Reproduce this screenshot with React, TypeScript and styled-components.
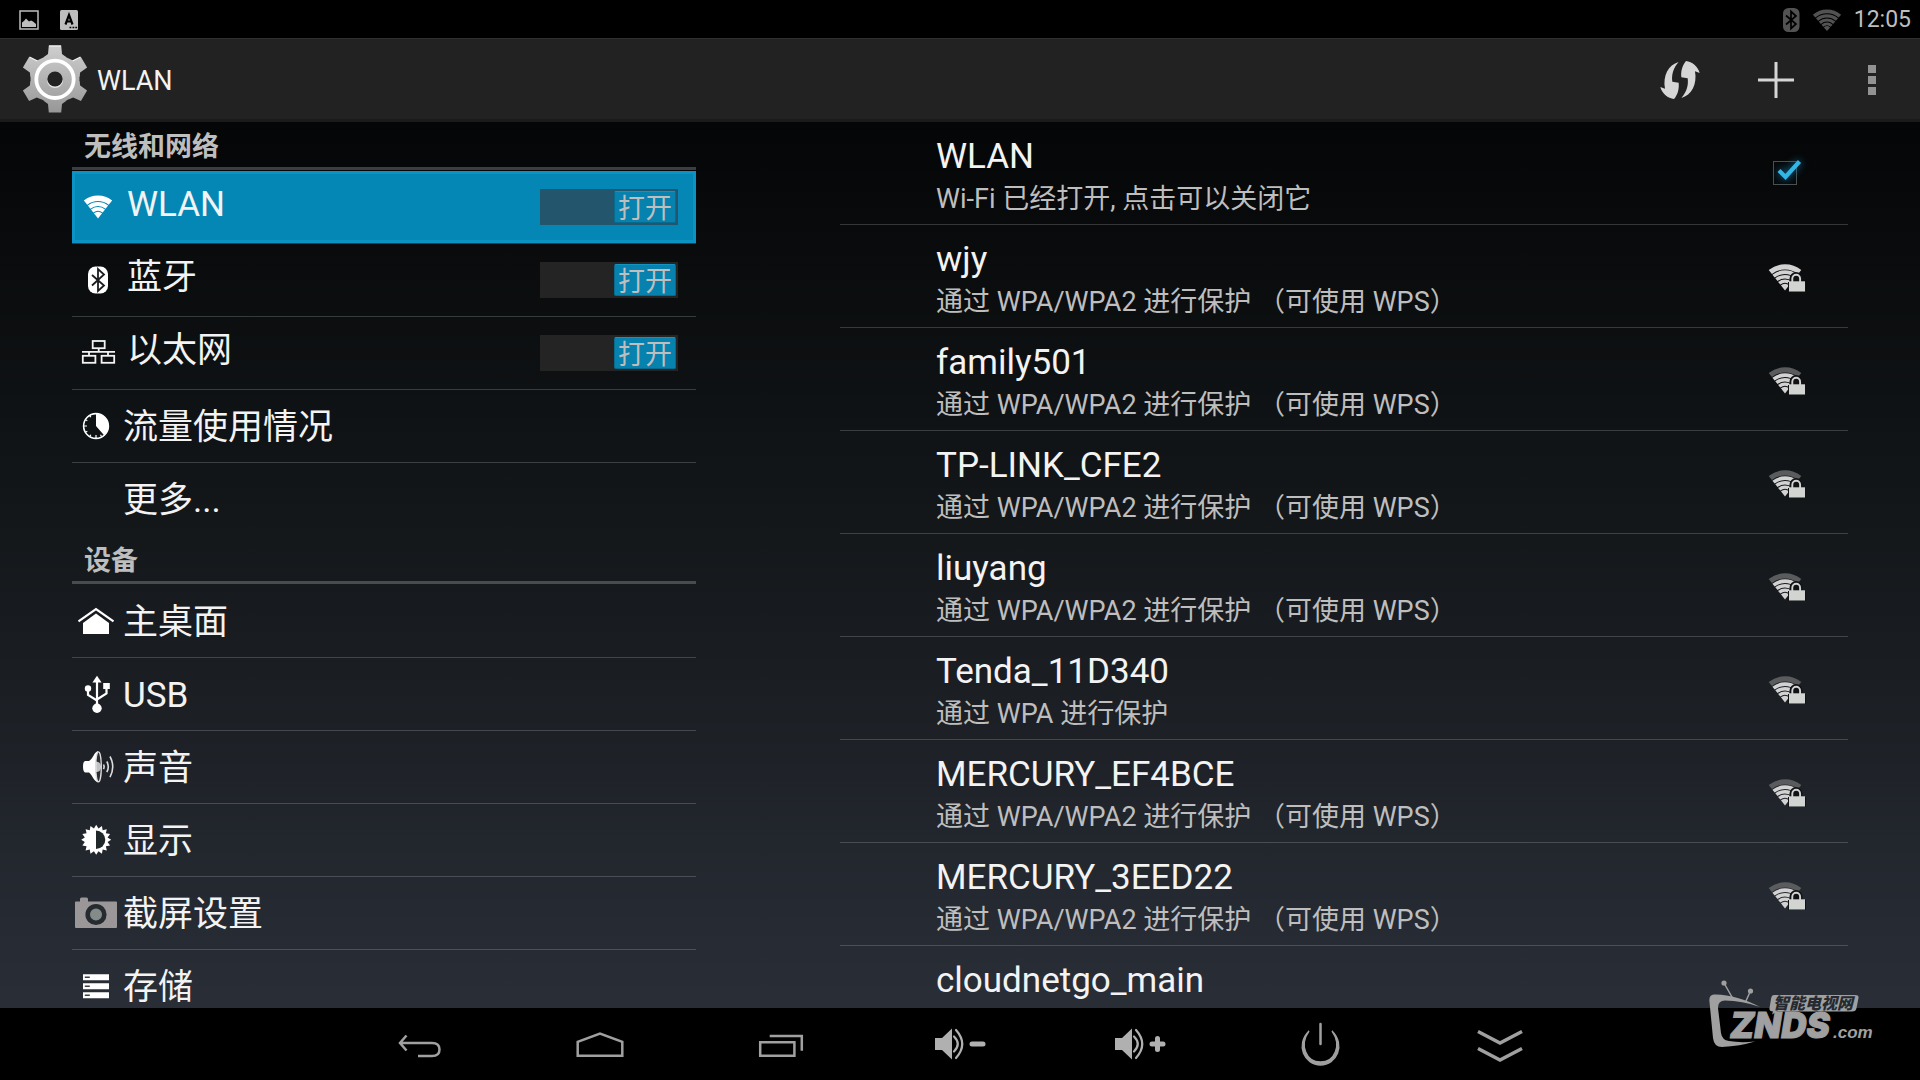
import React from 'react';
import styled, { createGlobalStyle } from 'styled-components';

const GlobalStyle = createGlobalStyle`
  *, *::before, *::after { box-sizing: border-box; }
  html, body { margin: 0; padding: 0; background: #000; overflow: hidden; }
  body { font-family: Roboto, "Noto Sans CJK SC", sans-serif; color: #f3f3f3; }
  button { font: inherit; color: inherit; background: none; border: 0; padding: 0; margin: 0; }
  h1, h2, ul, p { margin: 0; padding: 0; font-weight: 400; }
  ul { list-style: none; }
  svg { display: block; flex: none; }
`;

const Screen = styled.div`
  position: relative;
  height: 100vh;
  display: flex;
  flex-direction: column;
  overflow: hidden;
  background: linear-gradient(#000 0%, #14181b 50%, #292d36 92%, #2a2e38 100%);
`;

const StatusBar = styled.header`
  flex: none;
  height: 38px;
  padding: 2px 9px 0 19px;
  display: flex;
  align-items: center;
  justify-content: space-between;
  background: #000;
`;

const StatusGroup = styled.div<{ $gap: number }>`
  display: flex;
  align-items: center;
  gap: ${(p) => p.$gap}px;
`;

const Clock = styled.time`
  font-size: 23px;
  line-height: 36px;
  color: #bebebe;
`;

const ActionBar = styled.div`
  flex: none;
  height: 84px;
  padding-top: 2px;
  display: flex;
  align-items: center;
  background: #222;
  border-top: 1px solid #303030;
  border-bottom: 3px solid #1b1b1b;
`;

const AppTitle = styled.div`
  flex: 1;
  display: flex;
  align-items: center;
  gap: 8px;
  padding-left: 21px;
  h1 { padding-top: 2px; font-size: 27px; line-height: 36px; }
`;

const ActionButton = styled.button`
  width: 96px;
  height: 78px;
  display: grid;
  place-items: center;
`;

const Panes = styled.main`
  flex: 1;
  min-height: 0;
  display: grid;
  grid-template-columns: 13fr 21fr;
  grid-template-rows: minmax(0, 1fr);
  column-gap: 144px;
  padding: 0 72px;
  overflow: hidden;
`;

const Pane = styled.section`
  min-width: 0;
  overflow: hidden;
`;

const GroupHeading = styled.h2`
  height: 48px;
  border-bottom: 3px solid rgba(255, 255, 255, 0.22);
  font-size: 27px;
  line-height: 46px;
  color: #bebebe;
  && { margin-bottom: 1px; padding: 2px 0 0 12px; font-weight: 700; }
`;

const SideRow = styled.li<{ $selected?: boolean; $last?: boolean }>`
  height: 73px;
  display: flex;
  align-items: center;
  padding-right: 18px;
  border-bottom: 1px solid ${(p) => (p.$last ? 'transparent' : 'rgba(255, 255, 255, 0.18)')};
  background: ${(p) => (p.$selected ? '#0587b5' : 'transparent')};
  background-clip: padding-box;
  box-shadow: ${(p) => (p.$selected ? 'inset 0 0 0 3px #0a93c3' : 'none')};
`;

const SideLink = styled.a`
  flex: 1;
  display: flex;
  align-items: center;
  gap: 3px;
  color: inherit;
  text-decoration: none;
  font-size: 35px;
  line-height: 48px;
`;

const SideLabel = styled.span<{ $raised?: boolean }>`
  padding: ${(p) => (p.$raised ? '0 0 5px' : '3px 0 0')};
`;

const IconCell = styled.span<{ $wide?: boolean }>`
  width: ${(p) => (p.$wide ? 52 : 48)}px;
  height: 48px;
  display: grid;
  place-items: center;
`;

const Switch = styled.button<{ $dim?: boolean }>`
  width: 138px;
  height: 36px;
  padding: 2px;
  display: flex;
  justify-content: flex-end;
  background: ${(p) => (p.$dim ? '#23566c' : '#242425')};
`;

const Thumb = styled.span`
  width: 62px;
  height: 32px;
  border-radius: 2px;
  background: #0781ae;
  border: 1px solid #076b90;
  border-top-color: #1593c0;
  color: #bebebe;
  font-size: 27px;
  line-height: 34px;
  text-align: center;
`;

const NetRow = styled.li`
  height: 103px;
  display: flex;
  border-bottom: 1px solid rgba(255, 255, 255, 0.18);
`;

const NetText = styled.div`
  flex: 1;
  padding: 13px 0 0 96px;
`;

const NetName = styled.p`
  font-size: 35px;
  line-height: 44px;
`;

const NetDetail = styled.p`
  font-size: 27px;
  line-height: 40px;
  color: #bebebe;
  white-space: pre;
`;

const Widget = styled.div<{ $signal?: boolean }>`
  width: 124px;
  display: grid;
  place-items: center;
  padding: ${(p) => (p.$signal ? '3px 0 0 2px' : '0')};
`;

const CheckWrap = styled.span`
  position: relative;
  width: 26px;
  height: 24px;
  input {
    appearance: none;
    margin: 0;
    display: block;
    width: 24px;
    height: 24px;
    border: 1px solid #4d4f50;
  }
  svg {
    position: absolute;
    left: 0;
    top: -6px;
    pointer-events: none;
    filter: drop-shadow(0 0 4px #0c7fae);
  }
`;

const NavBar = styled.nav`
  flex: none;
  height: 72px;
  display: flex;
  justify-content: center;
  background: #000;
`;

const NavButton = styled.button`
  width: 180px;
  display: grid;
  place-items: center;
`;

const Watermark = styled.div`
  position: absolute;
  right: 40px;
  bottom: 24px;
  pointer-events: none;
`;

/* Filled fan made of concentric bands above an apex. */
function band(cx: number, cy: number, outer: number, inner: number, deg: number) {
  const a = (deg * Math.PI) / 180;
  const s = Math.sin(a);
  const c = Math.cos(a);
  const start = `M${cx - outer * s} ${cy - outer * c}A${outer} ${outer} 0 0 1 ${cx + outer * s} ${cy - outer * c}`;
  return inner === 0
    ? `${start}L${cx} ${cy}Z`
    : `${start}L${cx + inner * s} ${cy - inner * c}A${inner} ${inner} 0 0 0 ${cx - inner * s} ${cy - inner * c}Z`;
}

type FanProps = { cx: number; cy: number; bands: number[][]; deg: number; fill: string; top?: string };
const Fan = ({ cx, cy, bands, deg, fill, top }: FanProps) => (
  <>
    {bands.map(([o, i], n) => (
      <path key={n} d={band(cx, cy, o, i, deg)} fill={n === 0 && top ? top : fill} />
    ))}
  </>
);

const Icon = ({ children }: { children: React.ReactNode }) => (
  <svg width="48" height="48" viewBox="0 0 48 48" fill="#fff" aria-hidden="true">{children}</svg>
);

const icons: Record<string, React.ReactNode> = {
  wifi: <Fan cx={24} cy={35.5} deg={38} fill="#fff" bands={[[23, 17.4], [16.4, 12.4], [11.4, 7.6], [6.6, 0]]} />,
  bluetooth: (
    <>
      <rect x="14" y="10.500" width="20" height="27" rx="7.500" />
      <path d="M18 19l12 10.500-6 5.500V13l6 5.500L18 29.500" fill="none" stroke="#1a1c1e" strokeWidth="1.800" />
    </>
  ),
  ethernet: (
    <g fill="none" stroke="#f3f3f3" strokeWidth="1.800">
      <rect x="18.700" y="12" width="12" height="7.200" />
      <rect x="8.800" y="26.800" width="12.600" height="7" />
      <rect x="27.600" y="26.800" width="12.600" height="7" />
      <path d="M24.700 19.500v3.200M8 22.800h33M15 23v3.500M34 23v3.500" />
    </g>
  ),
  usage: (
    <>
      <circle cx="24" cy="24" r="12.400" fill="none" stroke="#fff" strokeWidth="1.600" />
      <path d="M24 24V11.500A12.500 12.500 0 0 1 32.300 33.500Z" />
      <path d="M12 24h3M24 36v-3M17.800 13.500l1 1.800M13.500 17.800l1.800 1M13.500 30.200l1.800-1M17.800 34.500l1-1.800M29.500 34.500l-1-1.800" stroke="#fff" strokeWidth="1.200" />
    </>
  ),
  home: (
    <>
      <path d="M6.500 24.300L24 12l17.500 12.300" fill="none" stroke="#fff" strokeWidth="2.200" />
      <path d="M24 16.500L37 26V37H11V26Z" />
    </>
  ),
  usb: (
    <>
      <path d="M25 5.800l4.600 6.700h-9.200Z" />
      <circle cx="25" cy="38.300" r="4.700" />
      <circle cx="16" cy="18.500" r="3.200" />
      <rect x="31.200" y="13" width="6.600" height="6" />
      <path d="M25 11v26M16 20v5l9 5.500M34.500 18v5.500L25 29.500" fill="none" stroke="#fff" strokeWidth="2.200" />
    </>
  ),
  sound: (
    <>
      <path d="M13 18h4c4-2 5-9 9-10v31.500c-4-1-6-8-9-10h-4q-2-1-2-6t2-5.500Z" />
      <ellipse cx="26.500" cy="23.800" rx="2.800" ry="15" fill="#2b3034" stroke="#ddd" strokeWidth="1.300" />
      <path d="M24 18.500q5 0 5 5.300t-5 5.300Z" fill="#fff" opacity="0.700" />
      <path d="M31.500 21.500q1.200 2.300 0 4.600M34.800 18.500q3 5.300 0 10.600M38 13.500q5.500 10.300 0 20.600" fill="none" stroke="#ddd" strokeWidth="1.600" />
    </>
  ),
  display: (
    <>
      <path
        d={Array.from({ length: 32 }, (_, i) => {
          const a = (i * Math.PI) / 16;
          const r = i % 2 ? 11.6 : 15;
          return `${i ? 'L' : 'M'}${(24.2 + r * Math.sin(a)).toFixed(2)} ${(23.8 - r * Math.cos(a)).toFixed(2)}`;
        }).join('') + 'Z'}
      />
      <path d="M24 14.500a9.300 9.300 0 0 1 0 18.600Z" fill="#22272a" />
    </>
  ),
  camera: (
    <>
      <path d="M4 12.500h4V10q0-1.500 1.500-1.500h5q1.500 0 1.500 1.500v2.500h28q1 0 1 1V38q0 1-1 1H4q-1 0-1-1V13.500q0-1 1-1Z" fill="#9b9799" />
      <circle cx="24" cy="25.500" r="8.300" fill="#858b88" stroke="#252b30" strokeWidth="4.600" />
    </>
  ),
  storage: (
    <>
      <path d="M11 12.300h26v6H11ZM11 21.300h26v6H11ZM11 30.300h26v6H11Z" />
      <path d="M12.800 15.300h5M12.800 24.300h5M12.800 33.300h5" stroke="#3a3f45" strokeWidth="1.600" />
    </>
  ),
};

const GearIcon = () => (
  <svg width="68" height="70" viewBox="-34 -34 68 70" aria-hidden="true">
    <defs>
      <linearGradient id="steel" gradientUnits="userSpaceOnUse" x1="0" y1="-34" x2="0" y2="34">
        <stop offset="0" stopColor="#cfcfcf" />
        <stop offset="1" stopColor="#979797" />
      </linearGradient>
    </defs>
    <g fill="url(#steel)">
      <circle r="24.500" />
      <path
        d={Array.from({ length: 6 }, (_, i) => {
          const t = (i * Math.PI) / 3;
          const pt = (x: number, y: number) =>
            `${(x * Math.cos(t) - y * Math.sin(t)).toFixed(2)} ${(x * Math.sin(t) + y * Math.cos(t)).toFixed(2)}`;
          return `M${pt(-6.2, -33.5)}L${pt(6.2, -33.5)}L${pt(7, -25)}L${pt(11, -22)}L${pt(-11, -22)}L${pt(-7, -25)}Z`;
        }).join('')}
      />
    </g>
    <path d="M-6 -33h12" stroke="#f4f4f4" strokeWidth="1.200" />
    <path d="M-25.500 -22l8 4M25.500 -22l-8 4" stroke="#f4f4f4" strokeWidth="1.200" />
    <circle r="18.700" cy="0.300" fill="none" stroke="#fff" strokeWidth="3.800" />
    <path d="M-8 1.500a8 7.500 0 0 0 16 0Z" fill="#e6e6e6" />
    <circle r="7.600" fill="#222" />
  </svg>
);

const WpsIcon = () => {
  const d = 'M236 187C205 195 188 228 195 267L181 262C186 282 204 296 222 298C233 285 238 268 236 249L217 246C214 225 220 205 236 187Z';
  return (
    <svg width="40" height="40" viewBox="180 181 120 120" fill="#d6d6d6" aria-hidden="true">
      <path d={d} />
      <path d={d} transform="rotate(180 240 241)" />
    </svg>
  );
};

const BluetoothStatus = () => (
  <svg width="17" height="24" viewBox="0 0 17 24" aria-hidden="true">
    <rect width="16.500" height="24" rx="5.500" fill="#525252" />
    <path d="M3 7.500l10 8.500-5 4.500v-17l5 4.500L3 16.500" fill="none" stroke="#000" strokeWidth="1.700" />
  </svg>
);

const SignalLock = ({ full }: { full?: boolean }) => (
  <svg width="38" height="28" viewBox="0 0 38 28" role="img" aria-label="Wi-Fi">
    <Fan cx={17} cy={26.5} deg={38.5} fill="#d2d2d2" top={full ? '#d2d2d2' : '#5a5b5d'} bands={[[26.2, 21], [20.2, 16.6], [15.6, 12], [11, 7.6], [6.6, 0]]} />
    <path d="M20 18h1.500v-3.500a6.500 6.500 0 0 1 13 0V18H38v10H20Z" fill="#101214" />
    <path d="M24.300 18v-3.300a3.900 3.900 0 0 1 7.800 0V18" fill="none" stroke="#d2d2d2" strokeWidth="1.900" />
    <rect x="21" y="17.300" width="16" height="10.200" fill="#d2d4d2" />
  </svg>
);

const Volume = ({ plus }: { plus?: boolean }) => (
  <svg width="52" height="48" viewBox="0 0 52 48" fill="#b0b0b0" aria-hidden="true">
    <path d="M1 18h7l10-9.500v31L8 30H1Z" />
    <path d="M20 16.500q7.500 7.500 0 15M22 10q12.500 14 0 28" fill="none" stroke="#b0b0b0" strokeWidth="2.200" strokeLinecap="round" />
    <path d={plus ? 'M38 24h11M43.500 18.500v11' : 'M38 24h11'} stroke="#b0b0b0" strokeWidth="5" strokeLinecap="round" />
  </svg>
);

const NavIcon = ({ children }: { children: React.ReactNode }) => (
  <svg width="48" height="48" viewBox="0 0 48 48" fill="none" stroke="#a0a0a0" strokeWidth="2.500" aria-hidden="true">{children}</svg>
);

const sideGroups = [
  {
    title: '无线和网络',
    items: [
      { icon: 'wifi', text: 'WLAN', toggle: true, selected: true },
      { icon: 'bluetooth', text: '蓝牙', toggle: true },
      { icon: 'ethernet', text: '以太网', toggle: true },
      { icon: 'usage', text: '流量使用情况' },
      { icon: '', text: '更多...' },
    ],
  },
  {
    title: '设备',
    items: [
      { icon: 'home', text: '主桌面' },
      { icon: 'usb', text: 'USB' },
      { icon: 'sound', text: '声音' },
      { icon: 'display', text: '显示' },
      { icon: 'camera', text: '截屏设置' },
      { icon: 'storage', text: '存储' },
    ],
  },
] as { title: string; items: { icon: string; text: string; toggle?: boolean; selected?: boolean }[] }[];

const wps = '通过 WPA/WPA2 进行保护 （可使用 WPS）';
const networks = [
  { name: 'wjy', detail: wps, full: true },
  { name: 'family501', detail: wps },
  { name: 'TP-LINK_CFE2', detail: wps },
  { name: 'liuyang', detail: wps },
  { name: 'Tenda_11D340', detail: '通过 WPA 进行保护' },
  { name: 'MERCURY_EF4BCE', detail: wps },
  { name: 'MERCURY_3EED22', detail: wps },
];

export default function App() {
  return (
    <Screen>
      <GlobalStyle />
      <StatusBar>
        <StatusGroup $gap={21}>
          <svg width="20" height="20" viewBox="0 0 20 20" aria-hidden="true">
            <rect x="1" y="1" width="18" height="18" fill="none" stroke="#bebebe" strokeWidth="1.500" />
            <path d="M3 17v-4.500l2-1.500 2-2.500 3 3 2-1 2 1 3 2.500v3Z" fill="#bebebe" />
          </svg>
          <svg width="18" height="20" viewBox="0 0 18 20" aria-hidden="true">
            <rect width="18" height="20" rx="1.500" fill="#bebebe" />
            <path d="M5.500 14.500L9 5l3.500 9.500M6.800 11.500h4.600" fill="none" stroke="#000" strokeWidth="2.200" />
            <path d="M9.500 17.500h1.800M12.500 17.500h1.800M15.300 17.500h1.800" stroke="#000" strokeWidth="1.600" />
          </svg>
        </StatusGroup>
        <StatusGroup $gap={12}>
          <BluetoothStatus />
          <svg width="30" height="22" viewBox="0 0 30 22" aria-hidden="true">
            <Fan cx={15} cy={22} deg={41} fill="#525252" bands={[[21.5, 17.8], [16.8, 13.6], [12.6, 9.4], [8.4, 5.6], [4.8, 0]]} />
          </svg>
          <Clock>12:05</Clock>
        </StatusGroup>
      </StatusBar>

      <ActionBar>
        <AppTitle>
          <GearIcon />
          <h1>WLAN</h1>
        </AppTitle>
        <ActionButton aria-label="WPS"><WpsIcon /></ActionButton>
        <ActionButton aria-label="添加网络">
          <svg width="36" height="36" viewBox="0 0 36 36" aria-hidden="true">
            <path d="M18 0v36M0 18h36" stroke="#d6d6d6" strokeWidth="3" />
          </svg>
        </ActionButton>
        <ActionButton aria-label="更多选项">
          <svg width="8" height="30" viewBox="0 0 8 30" fill="#939393" aria-hidden="true">
            <path d="M0 0h8v8H0ZM0 11h8v8H0ZM0 22h8v8H0Z" />
          </svg>
        </ActionButton>
      </ActionBar>

      <Panes>
        <Pane>
          {sideGroups.map((group) => (
            <React.Fragment key={group.title}>
              <GroupHeading>{group.title}</GroupHeading>
              <ul>
                {group.items.map((item, i) => (
                  <SideRow key={item.text} $selected={item.selected} $last={i === group.items.length - 1}>
                    <SideLink href="#">
                      <IconCell $wide={item.toggle}>{item.icon && <Icon>{icons[item.icon]}</Icon>}</IconCell>
                      <SideLabel $raised={item.toggle}>{item.text}</SideLabel>
                    </SideLink>
                    {item.toggle && (
                      <Switch role="switch" aria-checked="true" aria-label={item.text} $dim={item.selected}>
                        <Thumb>打开</Thumb>
                      </Switch>
                    )}
                  </SideRow>
                ))}
              </ul>
            </React.Fragment>
          ))}
        </Pane>

        <Pane>
          <ul>
            <NetRow>
              <NetText>
                <NetName as="label" htmlFor="wlan-on">WLAN</NetName>
                <NetDetail>Wi-Fi 已经打开, 点击可以关闭它</NetDetail>
              </NetText>
              <Widget>
                <CheckWrap>
                  <input id="wlan-on" type="checkbox" defaultChecked />
                  <svg width="30" height="30" viewBox="0 0 30 30" aria-hidden="true">
                    <path d="M6 15.500l6.500 6.500L26.500 6.500" fill="none" stroke="#33b5e5" strokeWidth="4.200" />
                  </svg>
                </CheckWrap>
              </Widget>
            </NetRow>
            {networks.map((n) => (
              <NetRow key={n.name}>
                <NetText>
                  <NetName>{n.name}</NetName>
                  <NetDetail>{n.detail}</NetDetail>
                </NetText>
                <Widget $signal><SignalLock full={n.full} /></Widget>
              </NetRow>
            ))}
            <NetRow>
              <NetText>
                <NetName>cloudnetgo_main</NetName>
              </NetText>
            </NetRow>
          </ul>
        </Pane>
      </Panes>

      <NavBar>
        <NavButton aria-label="返回">
          <NavIcon><path d="M10.500 15.500L4 23l6.500 7.500M4.500 23H36q7.500 0 7.500 6.500T36 36H22" /></NavIcon>
        </NavButton>
        <NavButton aria-label="主屏幕">
          <NavIcon><path d="M1.700 35.700V21.800L24 13.700l22.300 8.100v13.900Z" /></NavIcon>
        </NavButton>
        <NavButton aria-label="最近任务">
          <NavIcon><path d="M4.200 22.300h34.200v13.400H4.200ZM13.700 16h32.100v14.700" /></NavIcon>
        </NavButton>
        <NavButton aria-label="音量减"><Volume /></NavButton>
        <NavButton aria-label="音量加"><Volume plus /></NavButton>
        <NavButton aria-label="电源">
          <NavIcon>
            <path d="M24.500 4v20" strokeLinecap="round" />
            <path d="M13 11C-1 25 8.500 45 24.500 45S50 25 36 11C46 25 39 42 24.500 42S3 25 13 11Z" fill="#a0a0a0" strokeWidth="1.400" />
          </NavIcon>
        </NavButton>
        <NavButton aria-label="隐藏">
          <NavIcon><path d="M2 11.500L24 23l22-11.500M2 28.500L24 40l22-11.500" strokeWidth="3.500" /></NavIcon>
        </NavButton>
      </NavBar>

      <Watermark>
        <svg width="172" height="76" viewBox="1708 980 172 76" fill="#a0a0a0" role="img" aria-label="ZNDS.com">
          <circle cx="1724" cy="983" r="2.600" />
          <circle cx="1750.500" cy="991" r="2.600" />
          <path d="M1724 983l8.500 15M1750.500 991l-5 11" stroke="#a0a0a0" strokeWidth="1.500" />
          <path d="M1760 1007C1745 999 1728 994 1714 994.500Q1708.500 995 1709.500 1002L1713 1038Q1714 1047 1722 1047Q1740 1046 1755 1041.500Q1740 1043 1729 1041Q1722 1040 1721 1033L1718 1008Q1717.500 1001 1725 1000.500Q1742 1000.500 1760 1007Z" />
          <path d="M1774 995h81q4 0 3.500 3l-2 10q-.5 3.500-4.500 3.500h-75l-5 3 1-3q-4 0-3.500-3.500l1.500-9q.5-4 3-4Z" />
          <text x="1773" y="1009" fontFamily="'Noto Sans CJK SC', sans-serif" fontWeight="900" fontStyle="italic" fontSize="16" fill="#252a30">智能电视网</text>
          <text x="1730" y="1038" fontFamily="Inter, sans-serif" fontWeight="900" fontStyle="italic" fontSize="35" stroke="#a0a0a0" strokeWidth="1">ZNDS</text>
          <text x="1833" y="1038" fontFamily="'Liberation Sans', sans-serif" fontWeight="700" fontStyle="italic" fontSize="17">.com</text>
        </svg>
      </Watermark>
    </Screen>
  );
}
